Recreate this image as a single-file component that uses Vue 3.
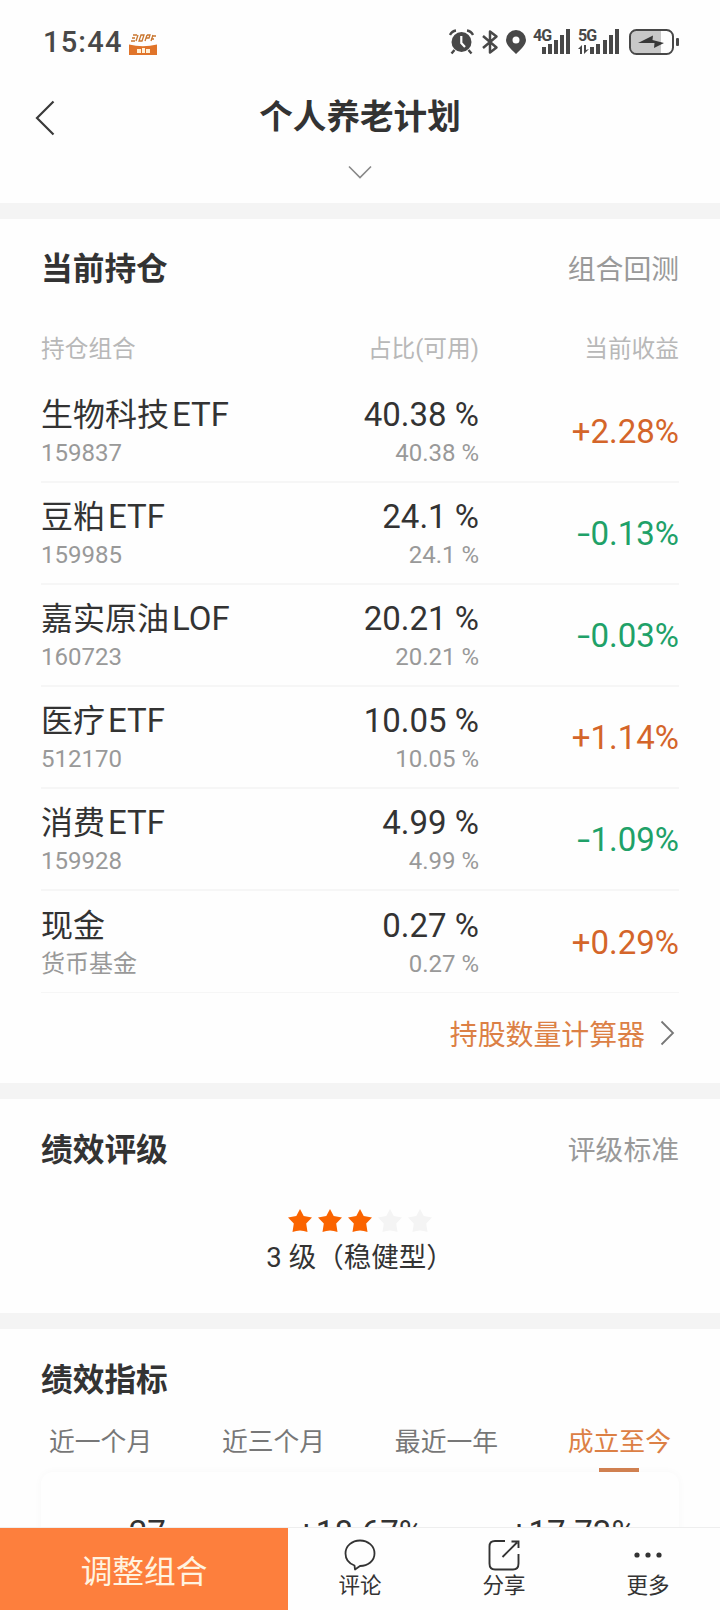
<script setup>
import { ref } from 'vue'

const holdings = ref([
  { name: '生物科技', suffix: 'ETF', code: '159837', ratio: '40.38 %', profit: '+2.28%' },
  { name: '豆粕', suffix: 'ETF', code: '159985', ratio: '24.1 %', profit: '-0.13%' },
  { name: '嘉实原油', suffix: 'LOF', code: '160723', ratio: '20.21 %', profit: '-0.03%' },
  { name: '医疗', suffix: 'ETF', code: '512170', ratio: '10.05 %', profit: '+1.14%' },
  { name: '消费', suffix: 'ETF', code: '159928', ratio: '4.99 %', profit: '-1.09%' },
  { name: '现金', suffix: '', code: '货币基金', ratio: '0.27 %', profit: '+0.29%' }
])

const level = ref(3)

const tabs = ['近一个月', '近三个月', '最近一年', '成立至今']
const activeTab = ref('成立至今')

const metrics = ['27', '+18.67%', '+17.73%']
</script>

<template>
  <div class="page">
    <header class="status-bar">
      <span class="time">15:44</span>
      <svg class="app-badge" width="28" height="22" viewBox="0 0 28 22">
        <path d="M0 10.5Q14 14 28 10.5V21H0z" fill="#e0742a" />
        <path d="M4 1h4M3 4h3M2 7h4M9 1l-2 6M12 1l-2 6h3l2-6zM18 1l-2 6M18 1h3l-1 3h-3M24 1l-2 6M23 2h4M22 5h3" fill="none" stroke="#c9762f" stroke-width="1.3" />
        <path d="M8 15h4v4H8zM13 14h3v5h-3zM17 15h4v4h-4z" fill="#fff0d8" />
      </svg>
      <div class="status-icons">
        <svg class="alarm" width="25" height="26" viewBox="0 0 25 26">
          <circle cx="12.500" cy="13" r="10" fill="#484848" />
          <path d="M1 6Q3 2 7 1.500M18 1.500Q22 2 24 6M5.500 21L2.500 24.500M19.500 21L22.500 24.500" fill="none" stroke="#484848" stroke-width="2.400" />
          <path d="M12.300 7v7l3.700 4" fill="none" stroke="#fff" stroke-width="2.200" />
        </svg>
        <svg class="bluetooth" width="18" height="26" viewBox="0 0 18 26">
          <path d="M2 7l13.500 11.500L9 23.500V2.500l6.500 5L2 19" fill="none" stroke="#484848" stroke-width="2.500" stroke-linejoin="round" />
        </svg>
        <svg class="pin" width="20" height="24" viewBox="0 0 20 24">
          <path fill-rule="evenodd" d="M10 0a10 10 0 0 1 10 10c0 5-5 9-10 14C5 19 0 15 0 10A10 10 0 0 1 10 0zm0 6.500a3.500 3.500 0 1 0 0 7 3.500 3.500 0 0 0 0-7z" fill="#484848" />
        </svg>
        <div class="signal signal-4g">
          <span class="net">4G</span>
          <svg width="38" height="26" viewBox="0 0 38 26">
            <path d="M9 18h4v7H9zM15 15h4v10h-4zM21 11h4v14h-4zM27 6h4v19h-4zM33 0h4v25h-4z" fill="#484848" />
          </svg>
        </div>
        <div class="signal signal-5g">
          <span class="net">5G</span>
          <svg width="42" height="26" viewBox="0 0 42 26">
            <path d="M0 20l4-4v9H2v-5zM6 16h2v5l3-1-5 5zM12 18h4v7h-4zM18 15h4v10h-4zM25 11h4v14h-4zM31 6h4v19h-4zM37 0h4v25h-4z" fill="#484848" />
          </svg>
        </div>
        <svg class="battery" width="50" height="26" viewBox="0 0 50 26">
          <path d="M8 2h24v22H8q-6 0-6-6V8q0-6 6-6z" fill="#c8c8c8" />
          <rect x="1" y="1" width="43" height="24" rx="6.500" fill="none" stroke="#484848" stroke-width="2" />
          <rect x="47" y="9" width="3" height="8" rx="1" fill="#484848" />
          <path d="M9 14L24 6.500l-.5 4.500L35 14l-10 5 .5-5z" fill="#383838" />
        </svg>
      </div>
    </header>

    <nav class="nav">
      <svg class="back" width="20" height="36" viewBox="0 0 20 36">
        <path d="M18.500 1.500L2 18l16.500 16.500" fill="none" stroke="#3a3a3a" stroke-width="2.200" />
      </svg>
      <h1 class="title">个人养老计划</h1>
    </nav>
    <div class="expand">
      <svg width="24" height="14" viewBox="0 0 24 14">
        <path d="M1 1.500l11 11 11-11" fill="none" stroke="#888" stroke-width="1.600" />
      </svg>
    </div>

    <section class="card holdings">
      <div class="section-head">
        <h2>当前持仓</h2>
        <span class="link">组合回测</span>
      </div>
      <div class="table-head">
        <span>持仓组合</span>
        <span class="ratio">占比(可用)</span>
        <span class="profit">当前收益</span>
      </div>
      <div v-for="item in holdings" :key="item.name" class="row">
        <div class="fund">
          <div class="main">{{ item.name }}<span v-if="item.suffix" class="suffix">{{ item.suffix }}</span></div>
          <div class="sub">{{ item.code }}</div>
        </div>
        <div class="ratio">
          <div class="main">{{ item.ratio }}</div>
          <div class="sub">{{ item.ratio }}</div>
        </div>
        <div class="profit" :class="item.profit.startsWith('+') ? 'up' : 'down'">
          <template v-if="item.profit.startsWith('-')"><span class="minus">-</span>{{ item.profit.slice(1) }}</template>
          <template v-else>{{ item.profit }}</template>
        </div>
      </div>
      <div class="calculator">
        <span>持股数量计算器</span>
        <svg width="15" height="26" viewBox="0 0 15 26">
          <path d="M1.500 1.500L13 13 1.500 24.500" fill="none" stroke="#777" stroke-width="1.800" />
        </svg>
      </div>
    </section>

    <section class="card rating">
      <div class="section-head">
        <h2>绩效评级</h2>
        <span class="link">评级标准</span>
      </div>
      <div class="stars">
        <svg v-for="n in 5" :key="n" class="star" :class="{ on: n <= level }" width="24" height="23" viewBox="0 0 24 23">
          <path d="M12 0l3.700 7 8.300 1.500-5.800 6 1.300 8.500q-7.500-3-15 0l1.300-8.500L0 8.500 8.300 7z" />
        </svg>
      </div>
      <p class="level">{{ level }} 级（稳健型）</p>
    </section>

    <section class="card indicators">
      <div class="section-head">
        <h2>绩效指标</h2>
      </div>
      <div class="tabs">
        <span v-for="tab in tabs" :key="tab" class="tab" :class="{ active: tab === activeTab }" @click="activeTab = tab">{{ tab }}</span>
      </div>
      <div class="metrics">
        <span v-for="m in metrics" :key="m">{{ m }}</span>
      </div>
    </section>

    <footer class="bottom-bar">
      <button class="adjust">调整组合</button>
      <div class="action">
        <svg width="32" height="32" viewBox="0 0 32 32">
          <path d="M10.500 26.500C5 24.500 1.500 20 1.500 14.500 1.500 7 8 1.500 16 1.500S30.500 7 30.500 14.500 24 27 16 27L11 30.500z" fill="none" stroke="#333" stroke-width="1.800" stroke-linejoin="round" />
        </svg>
        <span>评论</span>
      </div>
      <div class="action">
        <svg width="32" height="32" viewBox="0 0 32 32">
          <path d="M17 2H7Q1.500 2 1.500 7.500v17Q1.500 30.500 7 30.500h18q5.500 0 5.500-6V15M14.500 18L29 3.500M23.500 2.500h7V9" fill="none" stroke="#333" stroke-width="1.900" />
        </svg>
        <span>分享</span>
      </div>
      <div class="action">
        <svg width="32" height="32" viewBox="0 0 32 32">
          <circle cx="5" cy="16" r="2.600" fill="#333" />
          <circle cx="16" cy="16" r="2.600" fill="#333" />
          <circle cx="27" cy="16" r="2.600" fill="#333" />
        </svg>
        <span>更多</span>
      </div>
    </footer>
  </div>
</template>

<style>
body {
  margin: 0;
  overflow: hidden;
}
</style>

<style scoped>
.page {
  display: flex;
  flex-direction: column;
  width: 720px;
  height: 1610px;
  overflow: hidden;
  background-color: #fefefe;
  color: #333;
  font-family: Roboto, "Noto Sans CJK SC", sans-serif;
}

.page * {
  box-sizing: border-box;
}

h1,
h2,
p {
  margin: 0;
}

.status-bar {
  display: flex;
  flex: none;
  align-items: center;
  height: 84px;
  padding: 0 41px 0 43px;
}

.time {
  font-size: 29px;
  font-weight: 500;
  letter-spacing: 1.2px;
  line-height: 30px;
  color: #484848;
}

.app-badge {
  margin: 5px 0 0 6px;
}

.status-icons {
  display: flex;
  align-items: center;
  height: 26px;
  margin-left: auto;
}

.bluetooth {
  margin-left: 7px;
}

.pin {
  margin-left: 7px;
}

.signal {
  position: relative;
  height: 26px;
}

.signal svg {
  display: block;
}

.signal-4g {
  margin-left: 7px;
}

.signal-5g {
  margin-left: 7px;
}

.net {
  position: absolute;
  top: -1px;
  left: 0;
  font-size: 16px;
  font-weight: 700;
  letter-spacing: -1px;
  line-height: 16px;
  color: #484848;
}

.battery {
  margin-left: 9px;
}

.nav {
  display: flex;
  flex: none;
  align-items: center;
  height: 68px;
  padding: 0 35px;
}

.title {
  flex: 1;
  margin-right: 20px;
  font-size: 33.6px;
  font-weight: 700;
  line-height: 68px;
  text-align: center;
}

.expand {
  display: flex;
  flex: none;
  justify-content: center;
  height: 51px;
  padding-top: 13px;
}

.card {
  flex: none;
  padding: 0 41px;
  border-top: 16px solid #f4f4f4;
}

.section-head {
  display: flex;
  align-items: center;
  justify-content: space-between;
}

.section-head h2 {
  font-size: 31.700px;
  font-weight: 700;
  line-height: 40px;
}

.link {
  font-size: 27.800px;
  line-height: 40px;
  color: #999;
}

.holdings {
  height: 880px;
  padding-top: 31px;
}

.table-head {
  display: flex;
  height: 30px;
  margin-top: 44px;
  font-size: 23.700px;
  line-height: 30px;
  color: #b8b8b8;
}

.ratio {
  margin-left: auto;
  text-align: right;
}

.profit {
  width: 200px;
  text-align: right;
}

.row {
  display: flex;
  align-items: center;
  height: 102px;
  padding-top: 2px;
  border-bottom: 2px solid #f6f6f6;
}

.table-head + .row {
  height: 119px;
  padding-top: 19px;
}

.row:nth-last-child(2) {
  border-bottom-width: 1px;
}

.main {
  font-size: 32px;
  line-height: 42px;
}

.ratio .main {
  font-size: 33px;
}

.suffix {
  margin-left: 3px;
  font-size: 33px;
}

.sub {
  height: 34px;
  font-size: 24px;
  line-height: 34px;
  color: #999;
}

.row .profit {
  font-size: 33px;
  line-height: 40px;
}

.up {
  color: #d4652a;
}

.down {
  color: #20a168;
}

.minus {
  display: inline-block;
  margin-right: 2px;
  transform: scaleX(1.400);
}

.calculator {
  display: flex;
  align-items: center;
  justify-content: flex-end;
  gap: 15px;
  height: 80px;
  padding-right: 4px;
  font-size: 27.900px;
  color: #dc8045;
}

.rating {
  height: 230px;
  padding-top: 32px;
}

.stars {
  display: flex;
  justify-content: center;
  gap: 6px;
  margin-top: 38px;
}

.star {
  fill: #f4f4f4;
}

.star.on {
  fill: #fa6400;
}

.level {
  margin-top: 6px;
  font-size: 27.500px;
  line-height: 40px;
  text-align: center;
}

.indicators {
  flex: 1;
  min-height: 0;
  padding-top: 32px;
  overflow: hidden;
}

.tabs {
  display: flex;
  justify-content: space-between;
  height: 51px;
  margin: 20px 8px 0;
}

.tab {
  height: 51px;
  font-size: 25.800px;
  line-height: 42px;
  color: #777;
}

.tab.active {
  display: flex;
  flex-direction: column;
  align-items: center;
  color: #dc8045;
}

.tab.active::after {
  content: '';
  width: 40px;
  height: 4px;
  margin-top: 5px;
  background-color: #d08050;
}

.metrics {
  display: flex;
  justify-content: space-around;
  height: 120px;
  padding-top: 41px;
  border-radius: 12px;
  box-shadow: 0 0 8px rgba(0, 0, 0, 0.03);
  font-size: 33px;
  line-height: 40px;
}

.metrics span {
  flex: 1;
  text-align: center;
}

.bottom-bar {
  display: flex;
  flex: none;
  height: 83px;
  border-top: 1px solid #eee;
  background-color: #fefefe;
}

.adjust {
  width: 288px;
  padding: 0;
  border: 0;
  background-color: #fd7f3d;
  color: #fff3e0;
  font-family: inherit;
  font-size: 31.700px;
}

.action {
  display: flex;
  flex: 1;
  flex-direction: column;
  align-items: center;
  padding-top: 11px;
  font-size: 21.500px;
  line-height: 30px;
}
</style>
